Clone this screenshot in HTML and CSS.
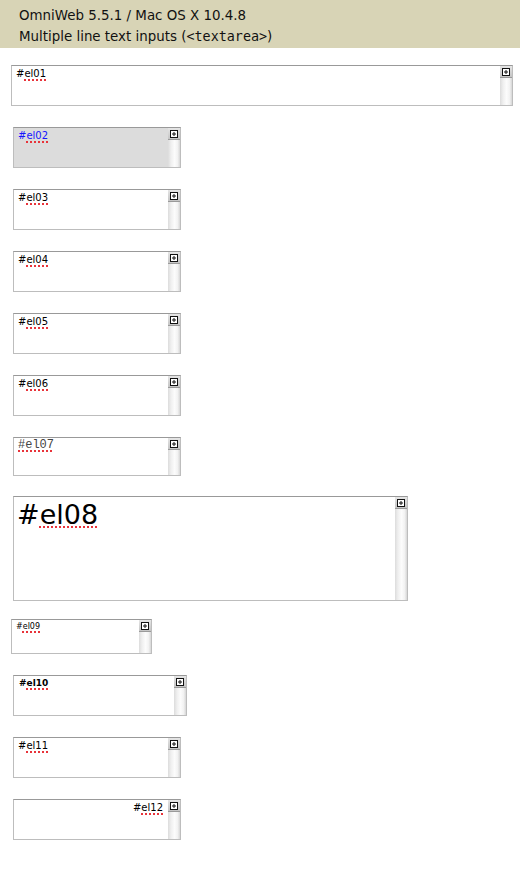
FILE: index.html
```html
<!DOCTYPE html>
<html>
<head>
<meta charset="utf-8">
<link rel="stylesheet" href="styles.css">
</head>
<body>
<header class="hdr">
  <div class="hdr-line">OmniWeb 5.5.1 / Mac OS X 10.4.8</div>
  <div class="hdr-line">Multiple line text inputs (<code class="mono">&lt;textarea&gt;</code>)</div>
</header>
<main class="list">
  <div class="ta ta01"><div class="txt">#<span class="sp">el01</span></div><div class="sb"><div class="sb-btn"><svg width="8" height="8" viewBox="0 0 8 8"><rect x="0.5" y="0.5" width="7" height="7" fill="#fff" stroke="#111"/><path d="M4 2v4M2 4h4" stroke="#111"/></svg></div></div></div>
  <div class="ta ta02"><div class="txt">#<span class="sp">el02</span></div><div class="sb"><div class="sb-btn"><svg width="8" height="8" viewBox="0 0 8 8"><rect x="0.5" y="0.5" width="7" height="7" fill="#fff" stroke="#111"/><path d="M4 2v4M2 4h4" stroke="#111"/></svg></div></div></div>
  <div class="ta ta03"><div class="txt">#<span class="sp">el03</span></div><div class="sb"><div class="sb-btn"><svg width="8" height="8" viewBox="0 0 8 8"><rect x="0.5" y="0.5" width="7" height="7" fill="#fff" stroke="#111"/><path d="M4 2v4M2 4h4" stroke="#111"/></svg></div></div></div>
  <div class="ta ta04"><div class="txt">#<span class="sp">el04</span></div><div class="sb"><div class="sb-btn"><svg width="8" height="8" viewBox="0 0 8 8"><rect x="0.5" y="0.5" width="7" height="7" fill="#fff" stroke="#111"/><path d="M4 2v4M2 4h4" stroke="#111"/></svg></div></div></div>
  <div class="ta ta05"><div class="txt">#<span class="sp">el05</span></div><div class="sb"><div class="sb-btn"><svg width="8" height="8" viewBox="0 0 8 8"><rect x="0.5" y="0.5" width="7" height="7" fill="#fff" stroke="#111"/><path d="M4 2v4M2 4h4" stroke="#111"/></svg></div></div></div>
  <div class="ta ta06"><div class="txt">#<span class="sp">el06</span></div><div class="sb"><div class="sb-btn"><svg width="8" height="8" viewBox="0 0 8 8"><rect x="0.5" y="0.5" width="7" height="7" fill="#fff" stroke="#111"/><path d="M4 2v4M2 4h4" stroke="#111"/></svg></div></div></div>
  <div class="ta ta07"><div class="txt"><span class="sp">#el07</span></div><div class="sb"><div class="sb-btn"><svg width="8" height="8" viewBox="0 0 8 8"><rect x="0.5" y="0.5" width="7" height="7" fill="#fff" stroke="#111"/><path d="M4 2v4M2 4h4" stroke="#111"/></svg></div></div></div>
  <div class="ta ta08"><div class="txt">#<span class="sp">el08</span></div><div class="sb"><div class="sb-btn"><svg width="8" height="8" viewBox="0 0 8 8"><rect x="0.5" y="0.5" width="7" height="7" fill="#fff" stroke="#111"/><path d="M4 2v4M2 4h4" stroke="#111"/></svg></div></div></div>
  <div class="ta ta09"><div class="txt">#<span class="sp">el09</span></div><div class="sb"><div class="sb-btn"><svg width="8" height="8" viewBox="0 0 8 8"><rect x="0.5" y="0.5" width="7" height="7" fill="#fff" stroke="#111"/><path d="M4 2v4M2 4h4" stroke="#111"/></svg></div></div></div>
  <div class="ta ta10"><div class="txt">#<span class="sp">el10</span></div><div class="sb"><div class="sb-btn"><svg width="8" height="8" viewBox="0 0 8 8"><rect x="0.5" y="0.5" width="7" height="7" fill="#fff" stroke="#111"/><path d="M4 2v4M2 4h4" stroke="#111"/></svg></div></div></div>
  <div class="ta ta11"><div class="txt">#<span class="sp">el11</span></div><div class="sb"><div class="sb-btn"><svg width="8" height="8" viewBox="0 0 8 8"><rect x="0.5" y="0.5" width="7" height="7" fill="#fff" stroke="#111"/><path d="M4 2v4M2 4h4" stroke="#111"/></svg></div></div></div>
  <div class="ta ta12"><div class="txt">#<span class="sp">el12</span></div><div class="sb"><div class="sb-btn"><svg width="8" height="8" viewBox="0 0 8 8"><rect x="0.5" y="0.5" width="7" height="7" fill="#fff" stroke="#111"/><path d="M4 2v4M2 4h4" stroke="#111"/></svg></div></div></div>
</main>
</body>
</html>
```
FILE: styles.css
```css
html, body {
  margin: 0;
  padding: 0;
  background: #fff;
}

.hdr {
  background: #d8d4b6;
  height: 48px;
  box-sizing: border-box;
  padding: 5px 19px 0;
  font-family: "DejaVu Sans", sans-serif;
  font-size: 13.4px;
  line-height: 21px;
  color: #111;
}

.mono {
  font-family: "DejaVu Sans Mono", monospace;
  font-size: 13.4px;
}

.list {
  display: flex;
  flex-direction: column;
  align-items: flex-start;
  gap: 21px;
  padding: 17px 0 0 13px;
}

.ta {
  display: flex;
  box-sizing: border-box;
  width: 168px;
  height: 41px;
  border: 1px solid #bdbdbd;
  border-top-color: #999;
  background: #fff;
}

.txt {
  flex: 1;
  min-width: 0;
  padding: 1px 4px 0 4px;
  font-family: "DejaVu Sans", sans-serif;
  font-size: 10px;
  line-height: 13px;
  color: #000;
  white-space: nowrap;
  overflow: hidden;
}

.sp {
  text-decoration: underline dotted #e8333a;
  text-decoration-thickness: 2px;
  text-underline-offset: 2px;
}

.sb {
  width: 12px;
  flex: none;
  background: linear-gradient(to right, #dcdcdc 0%, #efefef 25%, #fcfcfc 55%, #f2f2f2 80%, #d6d6d6 100%);
}

.sb-btn {
  height: 12px;
  display: flex;
  align-items: center;
  justify-content: center;
  background: linear-gradient(#e6e6e6, #c4c4c4);
  border-bottom: 1px solid #9a9a9a;
  box-sizing: border-box;
}

.ta01 {
  width: 502px;
  margin-left: -2px;
}

.ta02 {
  background: #dcdcdc;
}
.ta02 .txt {
  color: #1515ff;
}

.ta07 {
  height: 39px;
}
.ta07 .txt {
  font-family: "Liberation Mono", monospace;
  font-size: 12px;
  color: #444;
}

.ta08 {
  width: 395px;
  height: 105px;
  margin-top: -1px;
}
.ta08 .txt {
  font-size: 27px;
  line-height: 32px;
  padding: 2px 3px 0;
}

.ta09 {
  width: 141px;
  height: 35px;
  margin-left: -2px;
  margin-top: -3px;
}
.ta09 .txt {
  font-size: 8px;
  line-height: 11px;
}

.ta10 {
  width: 174px;
}
.ta10 .txt {
  font-weight: bold;
  font-size: 9px;
  padding-left: 5px;
}

.ta12 .txt {
  text-align: right;
  padding-right: 5px;
}
```
